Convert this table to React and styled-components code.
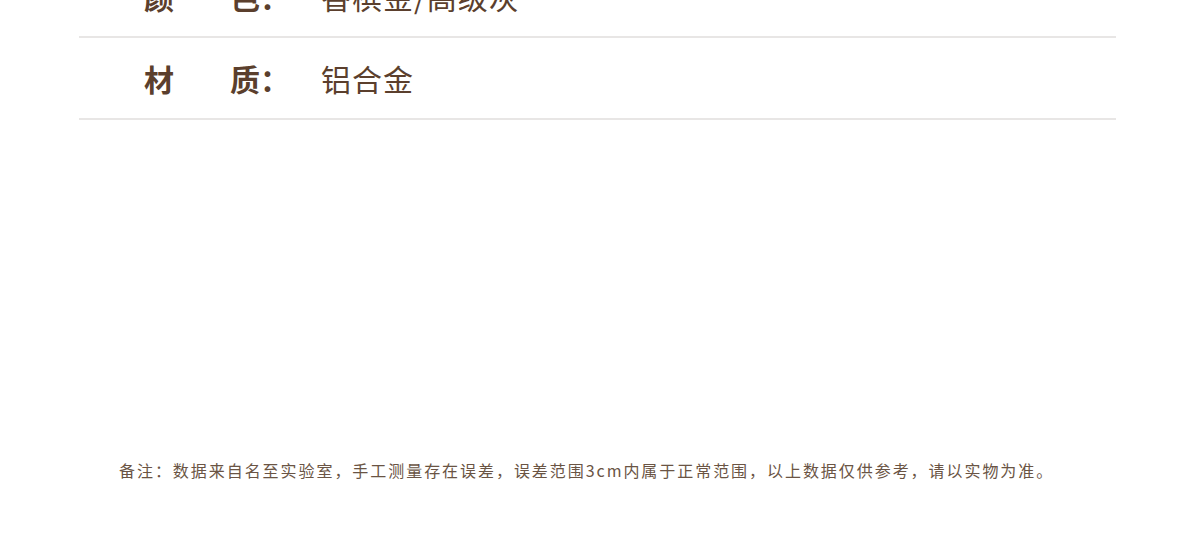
import React from 'react';
import styled, { createGlobalStyle } from 'styled-components';

const GlobalStyle = createGlobalStyle`
  html, body {
    margin: 0;
    padding: 0;
    background: #fff;
    overflow: hidden;
  }
  body {
    font-family: "Noto Sans CJK SC", "Noto Sans", sans-serif;
  }
`;

const Page = styled.div`
  width: 1200px;
  height: 551px;
  overflow: hidden;
  background: #fff;
`;

const SpecList = styled.div`
  width: 1037px;
  margin: -44px 0 0 79px;
`;

const SpecRow = styled.div`
  display: flex;
  align-items: center;
  height: 80px;
  border-bottom: 2px solid #e8e6e5;
  padding-left: 65px;
`;

const Label = styled.div`
  display: flex;
  justify-content: space-between;
  width: 146px;
  font-size: 30px;
  font-weight: 700;
  color: #5b3f2d;
  line-height: 1;
`;

const Value = styled.div`
  margin-left: 31px;
  font-size: 30px;
  font-weight: 400;
  letter-spacing: 1px;
  color: #5b3f2d;
  line-height: 1;
`;

const Note = styled.p`
  margin: 338px 0 0 119px;
  font-size: 16px;
  line-height: 24px;
  letter-spacing: 1.95px;
  color: #6a5444;
  white-space: nowrap;
`;

const specs = [
  { a: '颜', b: '色：', value: '香槟金/高级灰' },
  { a: '材', b: '质：', value: '铝合金' },
];

export default function App() {
  return (
    <Page>
      <GlobalStyle />
      <SpecList>
        {specs.map(s => (
          <SpecRow key={s.a}>
            <Label>
              <span>{s.a}</span>
              <span>{s.b}</span>
            </Label>
            <Value>{s.value}</Value>
          </SpecRow>
        ))}
      </SpecList>
      <Note>备注：数据来自名至实验室，手工测量存在误差，误差范围3cm内属于正常范围，以上数据仅供参考，请以实物为准。</Note>
    </Page>
  );
}
